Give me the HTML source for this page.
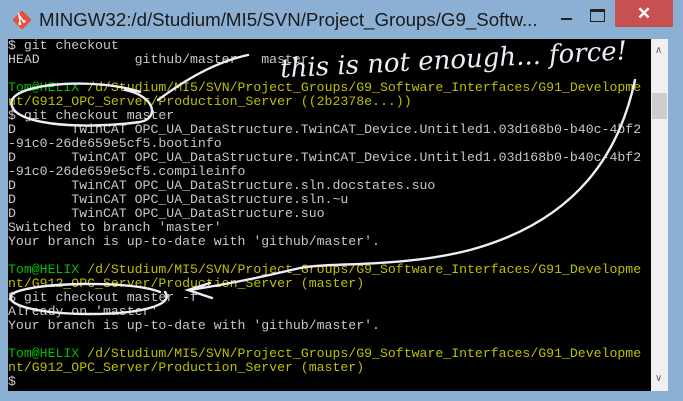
<html><head><style>
body{margin:0;width:683px;height:401px;background:#8cb0d4;position:relative;overflow:hidden;font-family:"Liberation Sans",sans-serif}
.title{position:absolute;left:39px;top:9px;font-size:18.7px;line-height:22px;color:#1a1a1a;white-space:nowrap}
.close{position:absolute;left:615px;top:0px;width:58px;height:27px;background:#c75050;color:#fff;text-align:center;font-size:17px;line-height:27px;font-weight:bold}
.term{position:absolute;left:8px;top:39px;width:643px;height:352px;background:#000;overflow:hidden}
pre{margin:0;font-family:"Liberation Mono",monospace;font-size:13.2px;line-height:14px;color:#c8c8c8;white-space:pre}
.g{color:#00c000}.y{color:#bfbf00}
.sb{position:absolute;left:651px;top:39px;width:17px;height:352px;background:#f0f0f0}
.th{position:absolute;left:1px;top:54px;width:15px;height:26px;background:#cdcdcd}
</style></head><body>
<svg style="position:absolute;left:12px;top:10px" width="20" height="20" viewBox="0 0 16 16"><rect x="2.5" y="2.5" width="11" height="11" rx="1" transform="rotate(45 8 8)" fill="#e8503a"/><circle cx="6.3" cy="5.8" r="1.2" fill="#fff"/><circle cx="9.7" cy="9.2" r="1.2" fill="#fff"/><circle cx="6.3" cy="11" r="1.2" fill="#fff"/><path d="M6.3 5.8L9.7 9.2M6.3 5.8V11M5 2.5L6.3 5.8" stroke="#fff" stroke-width="1.1"/></svg>
<div class="title">MINGW32:/d/Studium/MI5/SVN/Project_Groups/G9_Softw...</div>
<div style="position:absolute;left:561px;top:18px;width:11px;height:2px;background:#222"></div>
<div style="position:absolute;left:590px;top:9px;width:13px;height:9px;border:1px solid #222;border-top-width:3px"></div>
<div class="close">✕</div>
<div class="term"><pre>$ git checkout
HEAD            github/master   master

<span class="g">Tom@HELIX</span> <span class="y">/d/Studium/MI5/SVN/Project_Groups/G9_Software_Interfaces/G91_Developme
nt/G912_OPC_Server/Production_Server ((2b2378e...))</span>
$ git checkout master
D       TwinCAT OPC_UA_DataStructure.TwinCAT_Device.Untitled1.03d168b0-b40c-4bf2
-91c0-26de659e5cf5.bootinfo
D       TwinCAT OPC_UA_DataStructure.TwinCAT_Device.Untitled1.03d168b0-b40c-4bf2
-91c0-26de659e5cf5.compileinfo
D       TwinCAT OPC_UA_DataStructure.sln.docstates.suo
D       TwinCAT OPC_UA_DataStructure.sln.~u
D       TwinCAT OPC_UA_DataStructure.suo
Switched to branch 'master'
Your branch is up-to-date with 'github/master'.

<span class="g">Tom@HELIX</span> <span class="y">/d/Studium/MI5/SVN/Project_Groups/G9_Software_Interfaces/G91_Developme
nt/G912_OPC_Server/Production_Server (master)</span>
$ git checkout master -f
Already on 'master'
Your branch is up-to-date with 'github/master'.

<span class="g">Tom@HELIX</span> <span class="y">/d/Studium/MI5/SVN/Project_Groups/G9_Software_Interfaces/G91_Developme
nt/G912_OPC_Server/Production_Server (master)</span>
$</pre></div>
<div class="sb"><div class="th"></div><div style="position:absolute;left:4px;top:6px;font-size:10px;color:#606060">&#8743;</div><div style="position:absolute;left:4px;top:334px;font-size:10px;color:#606060">&#8744;</div></div>
<svg style="position:absolute;left:0;top:0" width="683" height="401">
<g fill="none" stroke="#eeeefa" stroke-width="2.4" stroke-linecap="round">
<path d="M140 92C100 78 20 82 12 100C5 125 80 130 140 122C160 118 155 96 125 90"/>
<path d="M158 100C185 80 215 62 248 55"/>
<path d="M635 80C620 150 580 220 470 250C400 268 330 262 300 268C270 275 240 282 190 290"/>
<path d="M210 283L188 290L212 298"/>
<path d="M160 292C130 280 30 282 12 294C2 305 40 314 90 314C140 314 175 305 165 292"/>
</g>
<text x="280" y="68" fill="#eeeefa" font-family="'DejaVu Serif',serif" font-style="italic" font-size="26" transform="rotate(-3 460 60)">this is not enough... force!</text>
</svg>
</body></html>
